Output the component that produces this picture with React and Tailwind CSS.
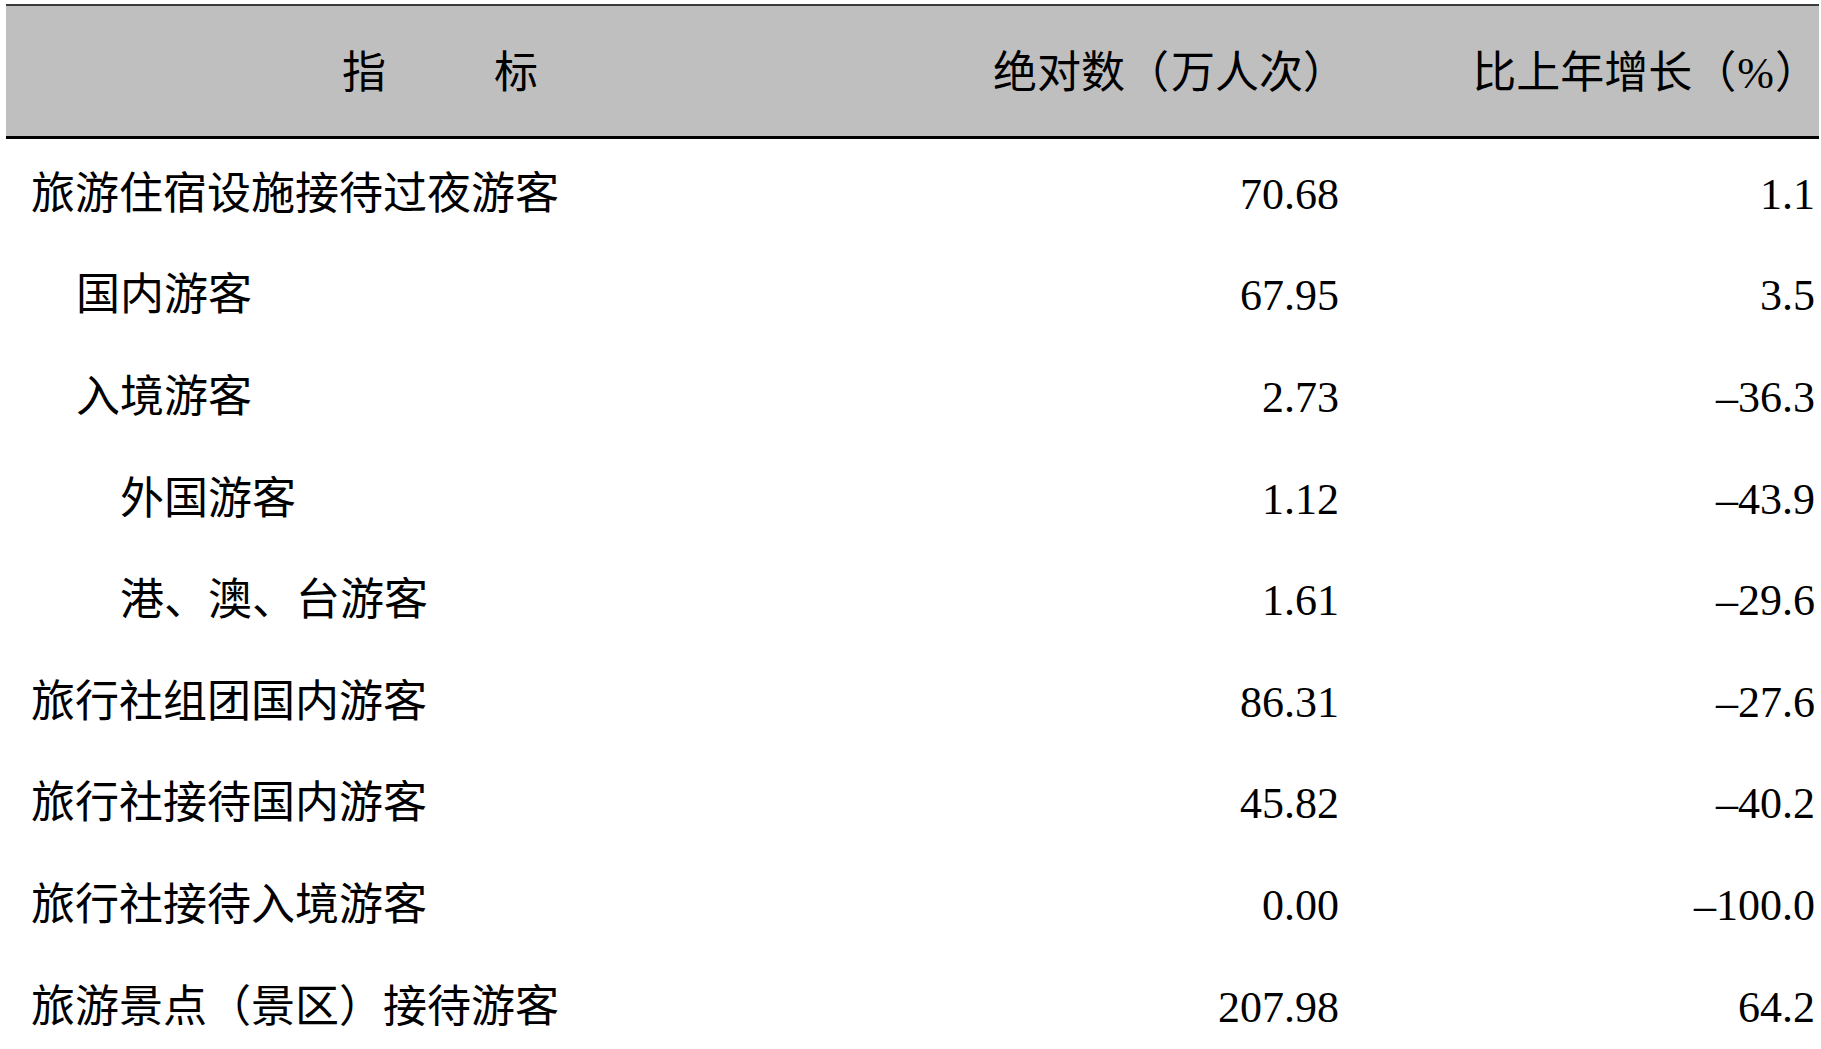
const rows = [
  { name: "旅游住宿设施接待过夜游客", level: 0, abs: "70.68", growth: "1.1" },
  { name: "国内游客", level: 1, abs: "67.95", growth: "3.5" },
  { name: "入境游客", level: 1, abs: "2.73", growth: "–36.3" },
  { name: "外国游客", level: 2, abs: "1.12", growth: "–43.9" },
  { name: "港、澳、台游客", level: 2, abs: "1.61", growth: "–29.6" },
  { name: "旅行社组团国内游客", level: 0, abs: "86.31", growth: "–27.6" },
  { name: "旅行社接待国内游客", level: 0, abs: "45.82", growth: "–40.2" },
  { name: "旅行社接待入境游客", level: 0, abs: "0.00", growth: "–100.0" },
  { name: "旅游景点（景区）接待游客", level: 0, abs: "207.98", growth: "64.2" },
];

const indent = ["pl-[25px]", "pl-[70px]", "pl-[114px]"];

const App = () => {
  return (
    <div
      className="w-full h-[1049px] overflow-hidden bg-white pt-[4px] pl-[6px] pr-[2px] text-black"
      style={{ fontFamily: '"Liberation Serif", "Noto Sans CJK SC", serif' }}
    >
      <div className="border-t-2 border-[#3a3a3a]">
        {/* header */}
        <div className="grid grid-cols-[860px_473px_1fr] h-[133px] items-center bg-[#bfbfbf] border-b-[3px] border-black text-[44px] leading-none pt-[6px]">
          <div className="flex justify-center gap-[108px] pl-[8px]">
            <span>指</span>
            <span>标</span>
          </div>
          <div className="text-right -mr-[8px]">
            绝对数（<span className="pl-[2px]">万人次</span>）
          </div>
          <div className="text-right">
            比上年增长（<span className="px-[1px]">%</span>）
          </div>
        </div>
        <div className="pt-[5px]">
          {rows.map((r) => (
            <div
              key={r.name}
              className="grid grid-cols-[860px_473px_1fr] h-[101.6px] items-center text-[44px] leading-none"
            >
              <div className={indent[r.level]}>{r.name}</div>
              <div className="text-right">{r.abs}</div>
              <div className="text-right pr-[4px]">{r.growth}</div>
            </div>
          ))}
        </div>
      </div>
    </div>
  );
};

export default App;
